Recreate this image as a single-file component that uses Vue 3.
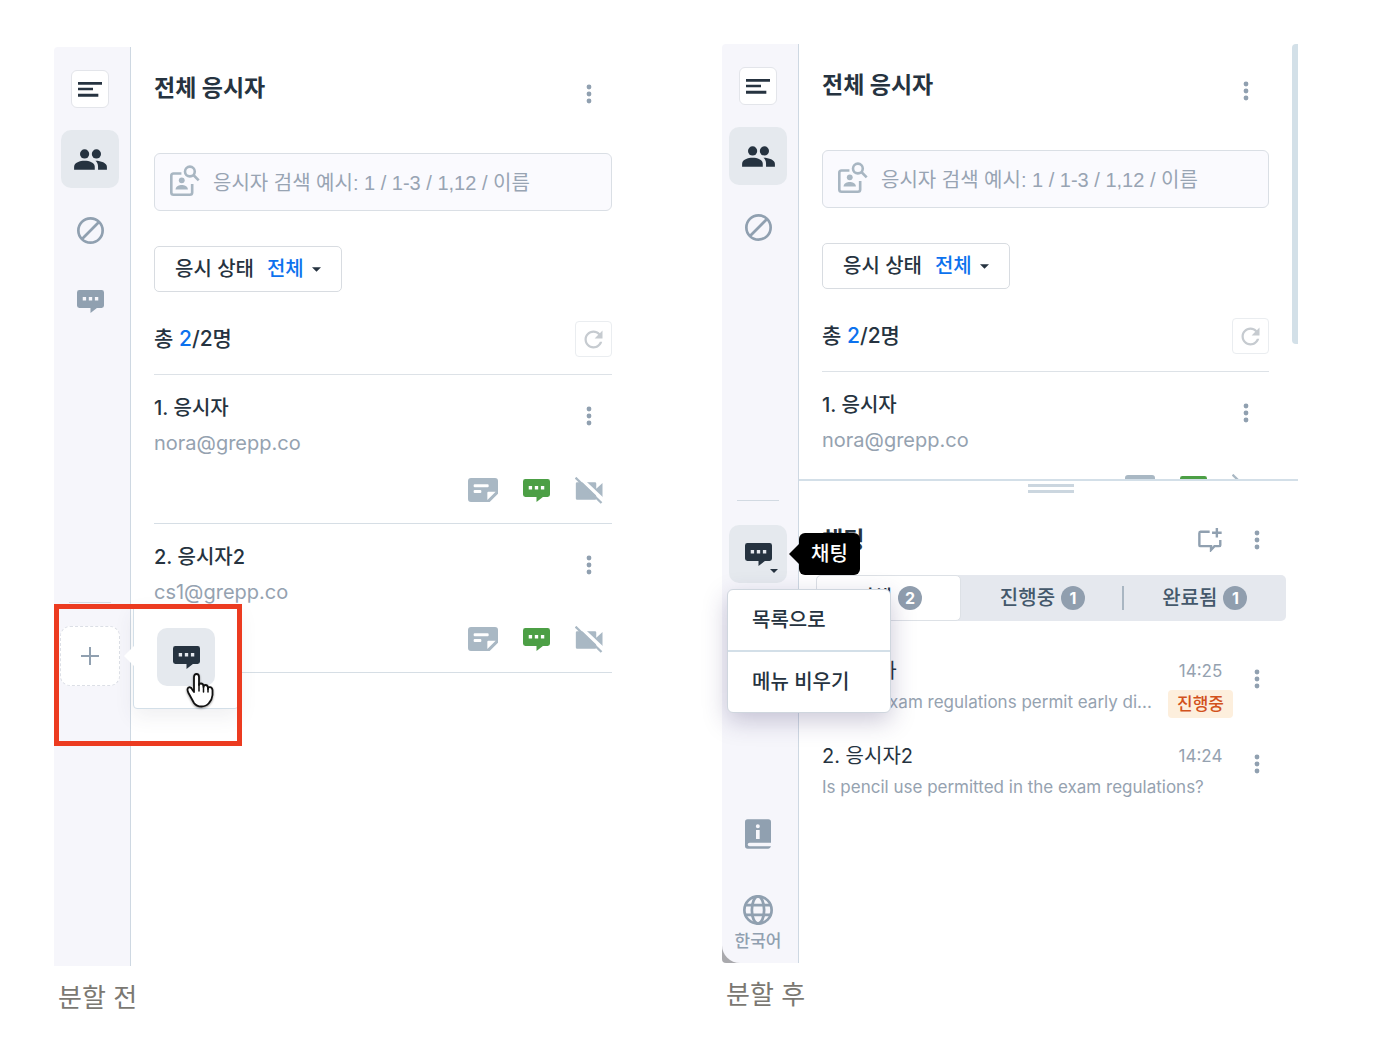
<template>
    <svg class="sprite" aria-hidden="true">
        <symbol id="i-menu" viewBox="0 0 72 45">
            <path d="M0 0h72v8H0zM0 17h45v8H0zM0 35h61v9H0z" />
        </symbol>
        <symbol id="i-people" viewBox="0 0 100 64">
            <circle cx="32" cy="15" r="14" />
            <circle cx="68" cy="15" r="14" />
            <path d="M0 63V54C0 42 18 36 32 36S63 42 63 54V63Z" />
            <path d="M65 36C82 36 100 43 100 54V63H73V54C73 46 70 40 65 36Z" />
        </symbol>
        <symbol id="i-ban" viewBox="0 0 80 80">
            <g fill="none" stroke="currentColor" stroke-width="8">
                <circle cx="40" cy="40" r="36" />
                <path d="M15 65L65 15" />
            </g>
        </symbol>
        <symbol id="i-chat" viewBox="0 0 80 68">
            <path d="M7 0H73Q80 0 80 7V46Q80 53 73 53H59L40 68V53H7Q0 53 0 46V7Q0 0 7 0ZM17 21V31H27V21ZM35 21V31H45V21ZM53 21V31H63V21Z" fill-rule="evenodd" />
        </symbol>
        <symbol id="i-note" viewBox="0 0 90 72">
            <path d="M9 0H81Q90 0 90 9V47L65 72H9Q0 72 0 63V9Q0 0 9 0ZM20 19Q17 19 17 22V25Q17 28 20 28H59Q62 28 62 25V22Q62 19 59 19ZM20 36Q17 36 17 39V42Q17 45 20 45H37Q40 45 40 42V39Q40 36 37 36ZM61 41Q58 41 58 44V66L83 41Z" fill-rule="evenodd" />
        </symbol>
        <symbol id="i-camoff" viewBox="0 0 84 82">
            <path d="M6 16H60Q64 16 64 20V36L83 18V67L64 50V65Q64 69 60 69H6Q2 69 2 65V20Q2 16 6 16Z" />
            <path d="M6 -6L90 74" stroke="#fff" stroke-width="10" />
            <path d="M1 2L80 79" stroke="currentColor" stroke-width="7" />
        </symbol>
        <symbol id="i-search" viewBox="0 0 92 95">
            <g fill="none" stroke="currentColor" stroke-width="8">
                <path d="M35 26H11Q4 26 4 33V84Q4 91 11 91H61Q68 91 68 84V58" />
                <circle cx="61" cy="20" r="15" />
                <path d="M71 30L88 47" />
            </g>
            <circle cx="36" cy="47" r="9" />
            <path d="M17 75C18 64 28 61 36 61S54 64 55 75Z" />
        </symbol>
        <symbol id="i-refresh" viewBox="0 0 24 24">
            <path d="M17.65 6.35C16.2 4.9 14.21 4 12 4c-4.42 0-7.99 3.58-7.99 8s3.57 8 7.99 8c3.73 0 6.84-2.55 7.73-6h-2.08c-.82 2.33-3.04 4-5.65 4-3.31 0-6-2.69-6-6s2.69-6 6-6c1.66 0 3.14.69 4.22 1.78L13 11h7V4l-2.35 2.35z" />
        </symbol>
        <symbol id="i-dots" viewBox="0 0 6 20">
            <circle cx="3" cy="3" r="2.4" />
            <circle cx="3" cy="10" r="2.4" />
            <circle cx="3" cy="17" r="2.4" />
        </symbol>
        <symbol id="i-caret" viewBox="0 0 10 5">
            <path d="M0 0H10L5 5Z" />
        </symbol>
        <symbol id="i-plus" viewBox="0 0 18 18">
            <path d="M8 0h2v8h8v2h-8v8H8v-8H0V8h8z" />
        </symbol>
        <symbol id="i-newchat" viewBox="0 0 70 70">
            <g fill="none" stroke="currentColor" stroke-width="7">
                <path d="M34 11H7Q4 11 4 15V50Q4 53 7 53H38V64L48 53H61Q65 53 65 50V35" />
                <path d="M55 0V28M41 14H69" />
            </g>
        </symbol>
        <symbol id="i-book" viewBox="0 0 78 88">
            <path d="M8 0H70Q78 0 78 8V70H14Q8 70 8 75.500T14 81H78Q76 88 70 88H8Q0 88 0 80V8Q0 0 8 0ZM33 32V59H44V32ZM38.500 15A6 6 0 1 0 38.500 27 6 6 0 1 0 38.500 15Z" fill-rule="evenodd" />
        </symbol>
        <symbol id="i-globe" viewBox="0 0 88 88">
            <g fill="none" stroke="currentColor" stroke-width="8">
                <circle cx="44" cy="44" r="40" />
                <ellipse cx="44" cy="44" rx="18" ry="40" />
                <path d="M6 30H82M6 58H82" />
            </g>
        </symbol>
    </svg>

    <main class="compare">
        <figure v-for="view in views" :key="view.id" :class="['figure', view.id]">
            <div class="panel">
                <nav class="rail" aria-label="메뉴">
                    <div class="rail-top">
                        <button class="menu-btn" aria-label="메뉴 열기">
                            <svg width="24" height="15"><use href="#i-menu" /></svg>
                        </button>
                        <button class="rail-btn active" aria-label="전체 응시자">
                            <svg width="33" height="21"><use href="#i-people" /></svg>
                        </button>
                        <button class="rail-btn" aria-label="차단">
                            <svg width="27" height="27"><use href="#i-ban" /></svg>
                        </button>
                        <button v-if="!view.split" class="rail-btn" aria-label="채팅">
                            <svg width="27" height="23"><use href="#i-chat" /></svg>
                        </button>
                    </div>

                    <div class="rail-split">
                        <template v-if="!view.split">
                            <button class="rail-btn add" aria-label="추가">
                                <svg width="18" height="18"><use href="#i-plus" /></svg>
                            </button>
                            <div class="popover">
                                <button class="rail-btn active" aria-label="채팅">
                                    <svg width="27" height="23"><use href="#i-chat" /></svg>
                                </button>
                                <svg class="hand" viewBox="0 0 28 36" width="28" height="36">
                                    <path d="M8 20V5Q8 2 10.500 2T13 5V13Q13 11.500 15 11.500T17.500 14V15Q17.500 13 19.500 13T22 15.500V17Q22 15 24 15.200T26.500 18V23Q26 28 23 31Q20 34.500 15.500 34.500Q10.500 34.500 8 31L2.500 21Q0.500 17 2.500 15.500Q5 14.500 6.500 18Z" fill="#fff" stroke="#111" stroke-width="1.800" stroke-linejoin="round" />
                                    <path d="M13 12V19M17.500 14V20M22 16V20" stroke="#111" stroke-width="1.500" fill="none" stroke-linecap="round" />
                                </svg>
                            </div>
                            <div class="highlight"></div>
                        </template>
                        <template v-else>
                            <button class="rail-btn active" aria-label="채팅">
                                <svg width="27" height="23"><use href="#i-chat" /></svg>
                                <svg class="corner-caret" width="8" height="4"><use href="#i-caret" /></svg>
                            </button>
                            <div class="tooltip" role="tooltip">채팅</div>
                            <div class="menu">
                                <button>목록으로</button>
                                <button>메뉴 비우기</button>
                            </div>
                        </template>
                    </div>

                    <div v-if="view.split" class="rail-bottom">
                        <button aria-label="안내">
                            <svg width="26" height="30"><use href="#i-book" /></svg>
                        </button>
                        <button class="lang">
                            <svg width="30" height="30"><use href="#i-globe" /></svg>
                            <span>한국어</span>
                        </button>
                    </div>
                </nav>

                <div class="content">
                    <section class="takers">
                        <header class="takers-head">
                            <h2>전체 응시자</h2>
                            <button class="dots" aria-label="더보기">
                                <svg width="6" height="20"><use href="#i-dots" /></svg>
                            </button>
                        </header>
                        <label class="search">
                            <svg width="30" height="31"><use href="#i-search" /></svg>
                            <input type="text" aria-label="응시자 검색" placeholder="응시자 검색 예시: 1 / 1-3 / 1,12 / 이름" />
                        </label>
                        <label class="filter">
                            <span>응시 상태</span>
                            <select>
                                <option>전체</option>
                            </select>
                            <svg width="9" height="5"><use href="#i-caret" /></svg>
                        </label>
                        <div class="count">
                            <p>총 <em>2</em>/2명</p>
                            <button class="refresh" aria-label="새로고침">
                                <svg width="27" height="27"><use href="#i-refresh" /></svg>
                            </button>
                        </div>
                        <ul class="taker-list">
                            <li v-for="(t, i) in takers" :key="t.email">
                                <div class="taker-info">
                                    <div>
                                        <h3>{{ i + 1 }}. {{ t.name }}</h3>
                                        <p>{{ t.email }}</p>
                                    </div>
                                    <button class="dots" aria-label="더보기">
                                        <svg width="6" height="20"><use href="#i-dots" /></svg>
                                    </button>
                                </div>
                                <div class="taker-actions">
                                    <button aria-label="메모">
                                        <svg width="30" height="24"><use href="#i-note" /></svg>
                                    </button>
                                    <button class="green" aria-label="채팅">
                                        <svg width="27" height="23"><use href="#i-chat" /></svg>
                                    </button>
                                    <button aria-label="카메라 꺼짐">
                                        <svg width="28" height="27"><use href="#i-camoff" /></svg>
                                    </button>
                                </div>
                            </li>
                        </ul>
                        <div v-if="view.split" class="scrollbar"></div>
                    </section>

                    <section v-if="view.split" class="chat">
                        <div class="handle"></div>
                        <header class="chat-head">
                            <h2>채팅</h2>
                            <button class="new-chat" aria-label="새 채팅">
                                <svg width="24" height="24"><use href="#i-newchat" /></svg>
                            </button>
                            <button class="dots" aria-label="더보기">
                                <svg width="6" height="20"><use href="#i-dots" /></svg>
                            </button>
                        </header>
                        <div class="tabs" role="tablist">
                            <button
                                v-for="tab in tabs"
                                :key="tab.label"
                                role="tab"
                                :class="{ on: tab.label === currentTab }"
                                @click="currentTab = tab.label">
                                {{ tab.label }}<span class="badge">{{ tab.count }}</span>
                            </button>
                        </div>
                        <ul class="chat-list">
                            <li v-for="(c, i) in chats" :key="c.time" :class="{ tagged: c.tag }">
                                <h3>{{ i + 1 }}. {{ c.name }}</h3>
                                <time>{{ c.time }}</time>
                                <p>{{ c.text }}</p>
                                <span v-if="c.tag" class="tag">{{ c.tag }}</span>
                                <button class="dots" aria-label="더보기">
                                    <svg width="6" height="20"><use href="#i-dots" /></svg>
                                </button>
                            </li>
                        </ul>
                    </section>
                </div>
            </div>
            <figcaption>{{ view.caption }}</figcaption>
        </figure>
    </main>
</template>

<script setup>
import { ref } from 'vue'

const views = [
    { id: 'before', split: false, caption: '분할 전' },
    { id: 'after', split: true, caption: '분할 후' }
]

const takers = [
    { name: '응시자', email: 'nora@grepp.co' },
    { name: '응시자2', email: 'cs1@grepp.co' }
]

const tabs = [
    { label: '전체', count: 2 },
    { label: '진행중', count: 1 },
    { label: '완료됨', count: 1 }
]
const currentTab = ref('전체')

const chats = [
    { name: '응시자', time: '14:25', text: 'Do the exam regulations permit early di...', tag: '진행중' },
    { name: '응시자2', time: '14:24', text: 'Is pencil use permitted in the exam regulations?', tag: null }
]
</script>

<style>
body {
    margin: 0;
    background: #fff;
}
</style>

<style scoped>
* {
    box-sizing: border-box;
}

h2, h3, p, ul, figure {
    margin: 0;
    padding: 0;
}

ul {
    list-style: none;
}

svg {
    display: block;
    fill: currentColor;
}

button {
    display: flex;
    align-items: center;
    justify-content: center;
    padding: 0;
    border: 0;
    background: none;
    color: #90a0b0;
    font: inherit;
    cursor: pointer;
}

.sprite {
    position: absolute;
    width: 0;
    height: 0;
}

.compare {
    display: grid;
    grid-template-columns: 1fr 1fr;
    align-items: start;
    gap: 92px;
    padding: 44px 84px 44px 54px;
    font-family: Inter, "Noto Sans CJK KR", sans-serif;
    font-size: 20px;
    line-height: 28px;
    color: #263340;
}

.before {
    padding-top: 3px;
}

.panel {
    display: flex;
    min-height: 919px;
}

figcaption {
    margin-top: 14px;
    padding-left: 4px;
    font-size: 26px;
    line-height: 36px;
    color: #7b7872;
}

/* side rail */
.rail {
    display: flex;
    flex-direction: column;
    align-items: center;
    flex: none;
    width: 77px;
    padding-right: 4px;
    border-right: 1px solid #ced8e2;
    border-radius: 4px 0 0 0;
    background: #f6f6fb;
}

.after .panel {
    background: linear-gradient(#fff 50%, #a9a9ad 50%);
    border-radius: 4px;
}

.after .rail {
    border-bottom-left-radius: 18px;
}

.rail-top {
    display: flex;
    flex-direction: column;
    align-items: center;
    gap: 13px;
    min-height: 555px;
    padding-top: 23px;
}

.after .rail-top {
    min-height: 456px;
}

.menu-btn {
    width: 38px;
    height: 38px;
    margin-bottom: 9px;
    border: 1px solid #e3e5ea;
    border-radius: 6px;
    background: #fff;
    color: #263340;
}

.rail-btn {
    flex: none;
    position: relative;
    width: 58px;
    height: 58px;
    border-radius: 10px;
}

.rail-btn.active {
    background: #e5e9ee;
    color: #263340;
}

.rail-split {
    position: relative;
    width: 58px;
    padding-top: 25px;
}

.rail-split::before {
    content: "";
    position: absolute;
    top: 0;
    left: 8px;
    right: 8px;
    height: 1px;
    background: #d2dae2;
}

.add {
    width: 60px;
    height: 60px;
    margin: -1px;
    border: 1px dashed #dcdfe6;
    background: #fff;
}

.popover {
    position: absolute;
    top: 3px;
    left: 72px;
    z-index: 1;
    padding: 22px 23px;
    border: 1px solid #d3dfe8;
    border-radius: 4px;
    background: #fff;
    box-shadow: 0 8px 20px rgba(60, 60, 90, 0.08);
}

.popover::before {
    content: "";
    position: absolute;
    top: 40px;
    left: -10px;
    border: 10px solid transparent;
    border-left-width: 0;
    border-right-color: #fff;
}

.hand {
    position: absolute;
    top: 66px;
    left: 52px;
    filter: drop-shadow(0 1px 1px rgba(0, 0, 0, 0.4));
}

.highlight {
    position: absolute;
    top: 2px;
    left: -7px;
    z-index: 2;
    width: 188px;
    height: 142px;
    border: 5px solid #ec3b20;
}

.corner-caret {
    position: absolute;
    right: 9px;
    bottom: 10px;
}

.tooltip {
    position: absolute;
    top: 33px;
    left: 70px;
    z-index: 3;
    padding: 7px 12px;
    border-radius: 6px;
    background: #000;
    color: #fff;
    white-space: nowrap;
    font-weight: 500;
}

.tooltip::before {
    content: "";
    position: absolute;
    top: 11px;
    left: -10px;
    border: 10px solid transparent;
    border-left-width: 0;
    border-right-color: #000;
}

.menu {
    position: absolute;
    top: 89px;
    left: -2px;
    z-index: 2;
    width: 164px;
    border: 1px solid #cfd6de;
    border-radius: 6px;
    background: #fff;
    box-shadow: 0 8px 24px rgba(50, 40, 100, 0.25);
}

.menu button {
    justify-content: flex-start;
    width: 100%;
    height: 60px;
    padding-left: 24px;
    color: #263340;
    font-weight: 500;
}

.menu button + button {
    height: 62px;
    border-top: 2px solid #d3dfe8;
}

.rail-bottom {
    display: flex;
    flex-direction: column;
    align-items: center;
    gap: 46px;
    margin-top: auto;
    padding-bottom: 8px;
}

.lang {
    flex-direction: column;
    gap: 2px;
    font-size: 17px;
    font-weight: 500;
}

/* test taker list */
.content {
    display: flex;
    flex-direction: column;
    flex: 1;
    min-width: 0;
    background: #fff;
}

.takers {
    position: relative;
    padding: 25px 18px 0 23px;
}

.after .takers {
    height: 435px;
    padding-right: 29px;
    overflow: hidden;
}

h2 {
    font-size: 23px;
    line-height: 32px;
    font-weight: 700;
}

.takers-head {
    display: flex;
    justify-content: space-between;
    align-items: flex-start;
}

.dots {
    flex: none;
    width: 47px;
    height: 44px;
}

.search {
    display: flex;
    align-items: center;
    gap: 13px;
    height: 58px;
    margin-top: 37px;
    padding: 0 15px 4px;
    border: 1px solid #dadfe5;
    border-radius: 6px;
    background: #fafafe;
    color: #a8b6c2;
}

.search svg {
    flex: none;
}

.search input {
    flex: 1;
    min-width: 0;
    padding: 6px 0 0;
    border: 0;
    outline: 0;
    background: none;
    font-family: "Liberation Sans", "Noto Sans CJK KR", sans-serif;
    font-size: 20px;
    color: #263340;
}

.search input::placeholder {
    color: #98a4b3;
    opacity: 1;
}

.filter {
    display: inline-flex;
    align-items: center;
    height: 46px;
    margin-top: 35px;
    padding: 0 20px;
    border: 1px solid #d8dce1;
    border-radius: 5px;
    font-weight: 500;
}

.filter select {
    appearance: none;
    margin: 0 8px 0 13px;
    padding: 0;
    border: 0;
    background: none;
    color: #0c72ee;
    font: inherit;
}

.count {
    display: flex;
    justify-content: space-between;
    align-items: center;
    margin-top: 29px;
    font-size: 21px;
    font-weight: 500;
}

.count em {
    color: #0c72ee;
    font-style: normal;
}

.refresh {
    width: 37px;
    height: 36px;
    border: 1px solid #eaedf0;
    border-radius: 4px;
    color: #c6cbd0;
}

.taker-list {
    margin-top: 17px;
    border-top: 1px solid #dde2e7;
}

.taker-list li {
    padding: 19px 0 18px;
    border-bottom: 1px solid #d6dee5;
}

.taker-info {
    display: flex;
    justify-content: space-between;
    align-items: flex-start;
}

h3 {
    font-size: 20px;
    font-weight: 500;
}

.taker-info p {
    margin-top: 7px;
    color: #95a2b0;
}

.taker-actions {
    display: flex;
    justify-content: flex-end;
    gap: 23px;
    margin-top: 18px;
    padding-right: 8px;
}

.taker-actions button {
    width: 30px;
    height: 30px;
    color: #a9b8c4;
}

.taker-actions .green {
    color: #4c9f45;
}

.scrollbar {
    position: absolute;
    top: 0;
    right: 0;
    width: 6px;
    height: 300px;
    border-radius: 4px 0 0 4px;
    background: #d3e0e8;
}

/* chat pane */
.chat {
    flex: 1;
    padding: 3px 12px 0 17px;
    border-top: 2px solid #d3dfe8;
}

.handle {
    width: 46px;
    height: 9px;
    margin: 0 auto;
    border: solid #cbd6df;
    border-width: 3px 0;
}

.chat-head {
    display: flex;
    align-items: center;
    height: 32px;
    margin-top: 31px;
    padding: 0 6px;
}

.chat-head h2 {
    flex: 1;
}

.new-chat {
    width: 24px;
    height: 44px;
    margin-right: 11px;
}

.tabs {
    display: flex;
    height: 46px;
    margin-top: 19px;
    border-radius: 5px;
    background: #e5e8ee;
}

.tabs button {
    position: relative;
    flex: 17;
    gap: 6px;
    border-radius: 5px;
    color: #44586b;
    font-weight: 500;
}

.tabs .on {
    flex: 15;
    border: 1px solid #dde1e6;
    background: #fff;
    color: #263340;
}

.tabs button:last-child::before {
    content: "";
    position: absolute;
    left: -2px;
    width: 2px;
    height: 24px;
    background: #a9b6c2;
}

.badge {
    width: 24px;
    border-radius: 50%;
    background: #909eae;
    color: #fff;
    font-size: 16px;
    line-height: 24px;
    font-weight: 700;
}

.chat-list {
    display: flex;
    flex-direction: column;
    gap: 28px;
    margin-top: 36px;
    padding: 0 6px;
}

.chat-list li {
    display: grid;
    grid-template-columns: minmax(0, 1fr) 65px 47px;
    grid-template-rows: 28px 24px;
    row-gap: 5px;
}

.chat-list h3 {
    font-weight: 400;
}

.chat-list time {
    color: #95a2b0;
    font-size: 17px;
    text-align: center;
}

.chat-list p {
    grid-row: 2;
    grid-column: 1 / 3;
    color: #95a2b0;
    font-size: 17px;
    line-height: 24px;
    white-space: nowrap;
}

.chat-list .tagged p {
    grid-column: 1;
}

.tag {
    grid-row: 2;
    grid-column: 2;
    height: 28px;
    border-radius: 4px;
    background: #fdefdd;
    color: #d2521c;
    font-size: 17px;
    font-weight: 500;
    text-align: center;
}

.chat-list .dots {
    grid-row: 1 / 3;
    grid-column: 3;
}
</style>
